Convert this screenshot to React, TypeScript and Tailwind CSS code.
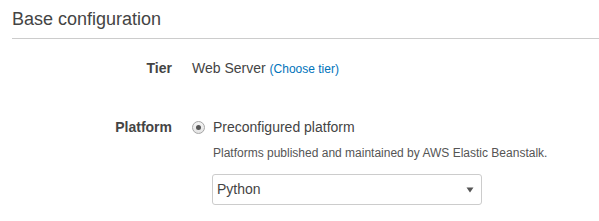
export default function App() {
  return (
    <div className="min-h-[221px] w-[599px] bg-white pl-3 font-['Liberation_Sans',Arial,sans-serif] text-[#444]">
      {/* Section header */}
      <div className="border-b border-[#ccc] pt-[9px] pb-[9px]">
        <h2 className="text-[18px] leading-[20px] text-[#444]">Base configuration</h2>
      </div>

      {/* Tier */}
      <div className="mt-[19px] grid grid-cols-[160px_1fr] gap-x-5">
        <div className="text-right text-[14px] font-bold leading-[20px] text-[#444]">Tier</div>
        <div className="text-[14px] leading-[20px]">
          Web Server{' '}
          <a href="#" className="text-[12px] text-[#0073bb]">
            (Choose tier)
          </a>
        </div>
      </div>

      {/* Platform */}
      <div className="mt-[38px] grid grid-cols-[160px_1fr] gap-x-5">
        <div className="text-right text-[14px] font-bold leading-[20px] text-[#444]">Platform</div>
        <div>
          <label className="flex items-center gap-[8px] text-[14px] leading-[20px]">
            <span className="flex h-[13px] w-[13px] items-center justify-center rounded-full border border-[#a6a6a6] bg-gradient-to-b from-[#f4f4f4] to-[#e4e4e4]">
              <span className="h-[5px] w-[5px] rounded-full bg-[#555]" />
            </span>
            Preconfigured platform
          </label>
          <p className="mt-[8px] pl-[21px] text-[12px] leading-[16px] text-[#555]">
            Platforms published and maintained by AWS Elastic Beanstalk.
          </p>
          <div className="mt-[13px] ml-5 flex h-[31px] w-[270px] items-center justify-between rounded-[3px] border border-[#ccc] bg-white pl-[4px] pr-[6px]">
            <span className="text-[14px] text-[#444]">Python</span>
            <svg width="8" height="6" viewBox="0 0 8 6" className="mr-[1px]">
              <path d="M0.5 0.5 L7.5 0.5 L4 5.5 Z" fill="#555" />
            </svg>
          </div>
        </div>
      </div>
    </div>
  );
}
